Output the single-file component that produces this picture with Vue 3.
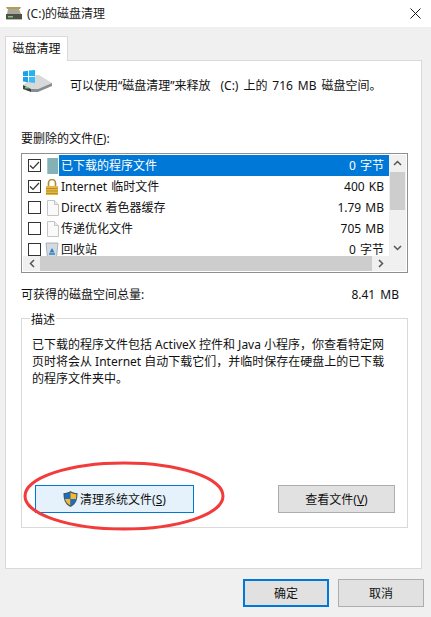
<script setup>
const rows = [
  { name: '已下载的程序文件', size: '0 字节', checked: true, icon: 'folder', selected: true },
  { name: 'Internet 临时文件', size: '400 KB', checked: true, icon: 'lock' },
  { name: 'DirectX 着色器缓存', size: '1.79 MB', checked: false, icon: 'file' },
  { name: '传递优化文件', size: '705 MB', checked: false, icon: 'file' },
  { name: '回收站', size: '0 字节', checked: false, icon: 'bin' },
]
</script>

<template>
  <div class="window">
    <header class="titlebar">
      <svg class="title-icon" width="16" height="13" viewBox="0 0 16 13">
        <path d="M0 0h15l-1 2H1z" fill="#b89a55" />
        <path d="M2 2h11l2 5H1z" fill="#a8a898" />
        <rect x="0" y="7" width="16" height="5" fill="#4f4f48" />
        <rect x="2" y="9" width="5" height="1.500" fill="#7fc77f" />
        <rect x="0" y="12" width="16" height="1" fill="#b9b9b0" />
      </svg>
      <span class="title-text">(C:)的磁盘清理</span>
      <svg class="close" width="11" height="11" viewBox="0 0 11 11">
        <path d="M.5.5l10 10M10.500.5l-10 10" stroke="#1a1a1a" fill="none" />
      </svg>
    </header>

    <main class="content">
      <div class="tab">磁盘清理</div>
      <section class="panel">
        <div class="intro">
          <svg class="disk" width="29" height="22" viewBox="0 0 29 22">
            <path d="M0 15L13 5h3l13 8-14 6H8z" fill="#d8d9da" />
            <path d="M8 19h7l14-6v3L15 22H8z" fill="#8a8d8f" />
            <path d="M0 15l8 4v3l-8-3z" fill="#3f4143" />
            <rect x="2" y="17" width="4" height="1.500" fill="#6fce6f" />
            <path d="M0 1.500L5 .8V6H0z" fill="#1aa3ea" />
            <path d="M6 .6L12 0v6H6z" fill="#22b4f0" />
            <path d="M0 7h5v5.200L0 11.500z" fill="#1aa3ea" />
            <path d="M6 7h6v6l-6-.7z" fill="#38bdf8" />
          </svg>
          <span class="intro-text">可以使用“磁盘清理”来释放&nbsp;&nbsp;(C:) 上的 716 MB 磁盘空间。</span>
        </div>

        <div class="list-label">要删除的文件(<u>F</u>):</div>

        <div class="listbox">
          <div class="list-main">
            <div class="rows">
              <div v-for="row in rows" :key="row.name" class="row">
                <span class="check">
                  <svg v-if="row.checked" width="11" height="9" viewBox="0 0 11 9">
                    <path d="M1 4.500l3 3L10 1" stroke="#333" stroke-width="1.200" fill="none" />
                  </svg>
                </span>
                <span class="file-icon">
                  <svg v-if="row.icon === 'folder'" width="13" height="16" viewBox="0 0 13 16">
                    <rect x="1" width="11" height="16" fill="#84b1b5" />
                    <rect x="1" width="1" height="16" fill="#a3c6c8" />
                  </svg>
                  <svg v-else-if="row.icon === 'lock'" width="14" height="16" viewBox="0 0 14 16">
                    <path d="M3.500 7V4a3.500 3.500 0 0 1 7 0v3" stroke="#a98b3c" stroke-width="1.600" fill="none" />
                    <rect x="1" y="7" width="12" height="9" fill="#e6b73e" />
                    <path d="M1 9.500h12M1 12h12M1 14.500h12" stroke="#b78f2c" />
                  </svg>
                  <svg v-else-if="row.icon === 'file'" width="13" height="16" viewBox="0 0 13 16">
                    <path d="M1.500.5h7l4 4v11h-11z" fill="#fafafa" stroke="#c4c4c4" />
                    <path d="M8.500.5v4h4" fill="#ececec" stroke="#c4c4c4" />
                  </svg>
                  <svg v-else width="14" height="16" viewBox="0 0 14 16">
                    <path d="M1 1h12l-1.500 15h-9z" fill="#d4dadf" stroke="#9aa3aa" stroke-width=".8" />
                    <path d="M7 6l2.500 4.500h-5z" fill="#2d7fc1" />
                    <path d="M4 12h6" stroke="#2d7fc1" stroke-width="1.500" />
                  </svg>
                </span>
                <span class="row-body" :class="{ selected: row.selected }">
                  <span>{{ row.name }}</span>
                  <span class="size">{{ row.size }}</span>
                </span>
              </div>
            </div>
            <div class="vscroll">
              <svg width="9" height="6" viewBox="0 0 9 6"><path d="M1 5l3.500-3.500L8 5" stroke="#555" stroke-width="1.500" fill="none" /></svg>
              <div class="vthumb"></div>
              <svg class="vdown" width="9" height="6" viewBox="0 0 9 6"><path d="M1 1l3.500 3.500L8 1" stroke="#555" stroke-width="1.500" fill="none" /></svg>
            </div>
          </div>
          <div class="hscroll">
            <span class="harrow">
              <svg width="6" height="9" viewBox="0 0 6 9"><path d="M5 1L1.500 4.500 5 8" stroke="#555" stroke-width="1.500" fill="none" /></svg>
            </span>
            <div class="hthumb"></div>
            <span class="harrow">
              <svg width="6" height="9" viewBox="0 0 6 9"><path d="M1 1l3.500 3.500L1 8" stroke="#555" stroke-width="1.500" fill="none" /></svg>
            </span>
          </div>
        </div>

        <div class="total">
          <span>可获得的磁盘空间总量:</span>
          <span>8.41 MB</span>
        </div>

        <div class="group">
          <span class="legend">描述</span>
          <p class="desc">已下载的程序文件包括 ActiveX 控件和 Java 小程序，你查看特定网页时将会从 Internet 自动下载它们，并临时保存在硬盘上的已下载的程序文件夹中。</p>
          <div class="group-buttons">
            <button class="btn clean">
              <svg width="15" height="16" viewBox="0 0 15 16">
                <path d="M7.500 0C5.500 1.500 3 2 .5 2c0 6 1 11 7 14 6-3 7-8 7-14-2.500 0-5-.5-7-2z" fill="#44576b" />
                <path d="M7.500 1.500V8H2c0-1.500-.3-3-.3-4.800 2 0 4-.6 5.800-1.700z" fill="#1a6fc4" />
                <path d="M7.500 1.500c1.800 1.100 3.800 1.700 5.800 1.700 0 1.800-.1 3.300-.3 4.800H7.500z" fill="#f6b92b" />
                <path d="M2 8h5.500v6.500C4.500 13 2.700 11 2 8z" fill="#f6b92b" />
                <path d="M7.500 8H13c-.7 3-2.500 5-5.500 6.500z" fill="#1a6fc4" />
              </svg>
              <span>清理系统文件(<u>S</u>)</span>
            </button>
            <button class="btn view">查看文件(<u>V</u>)</button>
          </div>
        </div>
      </section>

      <footer class="actions">
        <button class="btn action primary">确定</button>
        <button class="btn action">取消</button>
      </footer>
    </main>

    <svg class="annotation" width="205" height="72" viewBox="0 0 205 72">
      <ellipse cx="102" cy="36" rx="99" ry="33" fill="none" stroke="#f23c3c" stroke-width="3" />
    </svg>
  </div>
</template>

<style scoped>
.window {
  position: relative;
  width: 431px;
  height: 617px;
  background: #f0f0f0;
  font: 12px/17px "Noto Sans", "Noto Sans CJK SC", sans-serif;
  color: #111;
  overflow: hidden;
}
.titlebar {
  display: flex;
  align-items: center;
  height: 27px;
  padding: 0 10px 0 6px;
  background: #fff;
  box-sizing: border-box;
}
.title-icon { margin-right: 5px; }
.title-text { flex: 1; color: #222; }
.content {
  display: flex;
  flex-direction: column;
  padding: 9px 7px 0 5px;
}
.tab {
  align-self: flex-start;
  position: relative;
  z-index: 1;
  width: 63px;
  height: 25px;
  margin-bottom: -1px;
  box-sizing: border-box;
  border: 1px solid #d9d9d9;
  border-bottom: 0;
  background: #fff;
  text-align: center;
  line-height: 23px;
}
.panel {
  display: flex;
  flex-direction: column;
  height: 509px;
  margin-right: 2px;
  box-sizing: border-box;
  padding: 0 13px 0 15px;
  background: #fff;
  border: 1px solid #d9d9d9;
}
.intro {
  display: flex;
  align-items: flex-start;
  height: 66px;
  padding: 9px 0 0 2px;
  box-sizing: border-box;
}
.disk { flex: none; }
.intro-text {
  margin: 7px 0 0 18px;
  white-space: nowrap;
  word-spacing: 1.8px;
}
.list-label { height: 17px; margin-top: 3px; }
.listbox {
  height: 120px;
  margin-top: 6px;
  box-sizing: border-box;
  border: 1px solid #8f8f8f;
  padding: 1px;
  display: flex;
  flex-direction: column;
}
.list-main {
  display: flex;
  flex: 1;
  min-height: 0;
}
.rows {
  flex: 1;
  min-width: 0;
  overflow: hidden;
}
.row {
  display: flex;
  align-items: center;
  height: 21px;
  flex: none;
}
.check {
  flex: none;
  display: flex;
  align-items: center;
  justify-content: center;
  width: 13px;
  height: 13px;
  margin-left: 5px;
  box-sizing: border-box;
  border: 1px solid #333;
}
.file-icon {
  flex: none;
  display: flex;
  justify-content: center;
  width: 16px;
  margin-left: 3px;
}
.row-body {
  flex: 1;
  display: flex;
  justify-content: space-between;
  align-items: center;
  height: 21px;
  padding: 0 5px 0 2px;
  margin-left: -1px;
  white-space: nowrap;
  word-spacing: 1px;
}
.row-body.selected {
  background: #0078d7;
  color: #fff;
}
.size { margin-left: auto; }
.vscroll {
  flex: none;
  width: 17px;
  background: #f0f0f0;
  display: flex;
  flex-direction: column;
  align-items: center;
  padding-top: 5px;
  box-sizing: border-box;
}
.vthumb {
  width: 15px;
  height: 38px;
  margin-top: 6px;
  background: #cdcdcd;
}
.vdown { margin-top: auto; margin-bottom: 5px; }
.hscroll {
  flex: none;
  display: flex;
  align-items: stretch;
  height: 15px;
  background: #f0f0f0;
  padding-right: 17px;
}
.harrow {
  flex: none;
  display: flex;
  align-items: center;
  justify-content: center;
  width: 17px;
}
.hthumb {
  flex: 1;
  background: #cdcdcd;
}
.total {
  display: flex;
  justify-content: space-between;
  height: 17px;
  margin-top: 13px;
  padding-right: 9px;
  word-spacing: 2px;
}
.group {
  margin-top: 15px;
  padding: 0 12px 14px 10px;
  height: 210px;
  box-sizing: border-box;
  border: 1px solid #d9d9d9;
  display: flex;
  flex-direction: column;
}
.legend {
  align-self: flex-start;
  margin: -8px 0 0 -2px;
  padding: 0 1px;
  background: #fff;
  line-height: 17px;
}
.desc {
  margin: 8px 0 0;
  line-height: 17px;
  flex: 1;
}
.group-buttons {
  display: flex;
  justify-content: space-between;
  margin-left: 3px;
}
.btn {
  font: inherit;
  color: #111;
  height: 28px;
  box-sizing: border-box;
  border: 1px solid #adadad;
  background: #e1e1e1;
  padding: 0;
  display: flex;
  align-items: center;
  justify-content: center;
}
.clean {
  width: 159px;
  gap: 2px;
  border-color: #0078d7;
  background: #e5f1fb;
}
.view { width: 117px; }
.actions {
  display: flex;
  justify-content: flex-end;
  gap: 9px;
  margin-top: 10px;
}
.action { width: 86px; }
.primary {
  border: 2px solid #0078d7;
}
.annotation {
  position: absolute;
  left: 22px;
  top: 460px;
  pointer-events: none;
}
</style>
